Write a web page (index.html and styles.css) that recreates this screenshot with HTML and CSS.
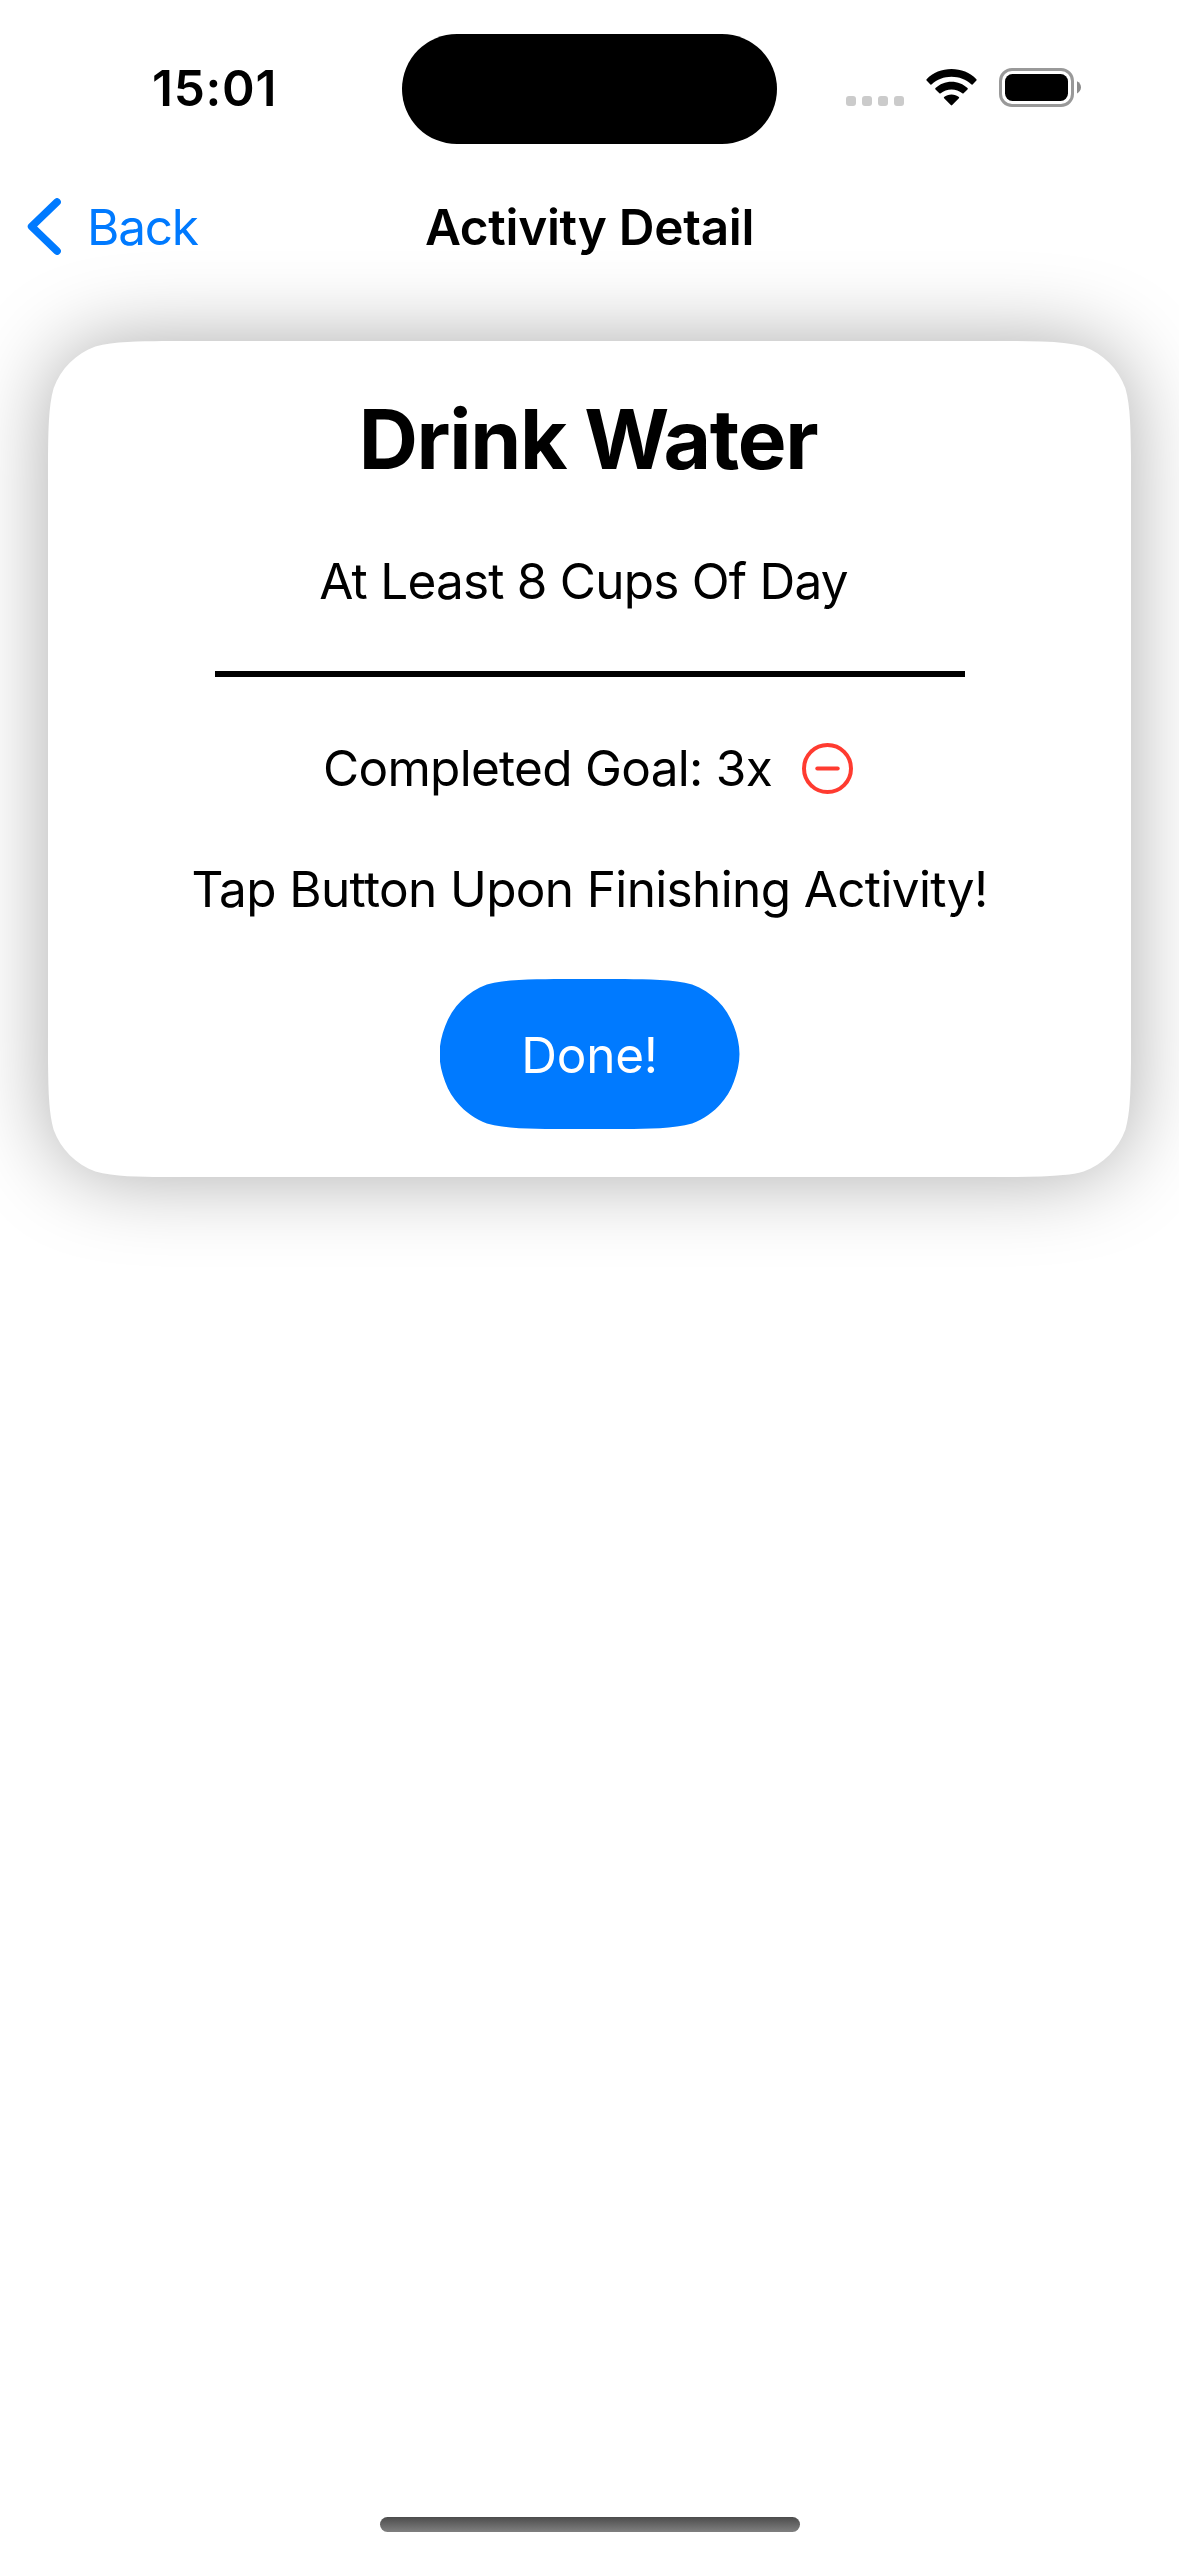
FILE: index.html
```html
<!DOCTYPE html>
<html lang="en">
<head>
<meta charset="utf-8">
<title>Activity Detail</title>
<link rel="stylesheet" href="styles.css">
</head>
<body>
<div class="screen">
  <header class="status">
    <div class="status-side"><span class="time">15:01</span></div>
    <div class="island"></div>
    <div class="status-side status-icons">
      <svg class="dots" width="58" height="10" viewBox="0 0 58 10" fill="#cbcbcb"><rect width="10" height="10" rx="3"/><rect x="16" width="10" height="10" rx="3"/><rect x="32" width="10" height="10" rx="3"/><rect x="48" width="10" height="10" rx="3"/></svg>
      <svg class="wifi" width="51" height="37" viewBox="0 0 51 37"><path d="M25.500 0C35 0 44 3.600 50.400 10.200Q51 10.900 50.400 11.600L46.600 15.400Q46 16 45.200 15.300C40 10.400 33 7.700 25.500 7.700S11 10.400 5.800 15.300Q5 16 4.400 15.400L.6 11.600Q0 10.900 .6 10.200C7 3.600 16 0 25.500 0ZM25.500 12.800C31.700 12.800 37.300 15.200 41.500 19.100Q42.200 19.800 41.500 20.500L37.600 24.300Q37 24.900 36.300 24.300C33.400 21.800 29.600 20.400 25.500 20.400S17.600 21.800 14.700 24.300Q14 24.900 13.400 24.300L9.500 20.500Q8.800 19.800 9.500 19.100C13.700 15.200 19.300 12.800 25.500 12.800ZM25.500 25.400C28.300 25.400 30.900 26.400 32.900 28.100Q33.500 28.700 32.900 29.300L26.200 36.100Q25.500 36.800 24.800 36.100L18.100 29.300Q17.500 28.700 18.100 28.100C20.100 26.400 22.700 25.400 25.500 25.400Z"/></svg>
      <svg class="battery" width="82" height="39" viewBox="0 0 82 39"><rect x="1.500" y="1.500" width="72" height="36" rx="11.500" fill="none" stroke="#999" stroke-width="3"/><rect x="6" y="6" width="63" height="27" rx="7.500"/><path d="M78 13.200C80.500 14.300 82 16.700 82 19.300S80.500 24.300 78 25.400Z" fill="#8c8c8c"/></svg>
    </div>
  </header>
  <nav class="nav">
    <a class="back">
      <svg class="chevron" width="34" height="57" viewBox="0 0 34 57"><path d="M30 4L4.600 28.500L30 53" fill="none" stroke="#007aff" stroke-width="7.600" stroke-linecap="round" stroke-linejoin="round"/></svg>
      <span class="back-label">Back</span>
    </a>
    <h1 class="title">Activity Detail</h1>
    <div></div>
  </nav>
  <main class="card-shadow">
    <section class="card">
      <h2 class="name">Drink Water</h2>
      <p class="line detail">At Least 8 Cups Of Day</p>
      <div class="rule"></div>
      <div class="goal">
        <p class="line goal-text">Completed Goal: 3x</p>
        <svg width="51" height="51" viewBox="0 0 51 51" fill="none" stroke="#ff3b30" stroke-width="4"><circle cx="25.500" cy="25.500" r="23.500"/><path d="M15.300 25.500H35.700" stroke-linecap="round"/></svg>
      </div>
      <p class="line hint">Tap Button Upon Finishing Activity!</p>
      <button class="done"><span class="done-label">Done!</span></button>
    </section>
  </main>
  <div class="home"></div>
</div>
</body>
</html>
```
FILE: styles.css
```css
* { box-sizing: border-box; margin: 0; padding: 0; }
body {
  background: #fff;
  color: #000;
  font-family: Inter, "Liberation Sans", sans-serif;
  font-size: 49.5px;
  line-height: 60px;
}
svg { display: block; flex: none; }
.screen {
  width: 1179px;
  height: 2556px;
  display: flex;
  flex-direction: column;
  overflow: hidden;
}
.status {
  height: 177px;
  display: grid;
  grid-template-columns: 402px 375px 402px;
  align-items: start;
  flex: none;
}
.time {
  display: block;
  padding: 58px 0 0 152px;
  font-weight: 600;
  letter-spacing: 0.75px;
}
.island {
  height: 110px;
  margin-top: 34px;
  border-radius: 55px;
  background: #000;
}
.status-icons {
  display: flex;
  align-items: flex-start;
  padding: 68px 0 0 69px;
}
.dots { margin-top: 28px; }
.wifi { margin: 1px 22px 0; }
.nav {
  height: 164px;
  display: grid;
  grid-template-columns: 1fr auto 1fr;
  align-items: start;
  flex: none;
}
.back {
  display: flex;
  align-items: flex-start;
  gap: 26px;
  padding: 20px 0 0 27px;
  color: #007aff;
  letter-spacing: -1.2px;
}
.chevron { margin-top: 1px; }
.title {
  margin-top: 20px;
  font-size: 49.5px;
  font-weight: 600;
  letter-spacing: -0.3px;
}
.card-shadow {
  width: 1083px;
  margin: 0 auto;
  filter: drop-shadow(0 0 41px rgba(0, 0, 0, 0.33));
}
.card {
  height: 836px;
  display: flex;
  flex-direction: column;
  align-items: center;
  background: #fff;
  clip-path: path("M114.650 0H968.350C991 0.400 1017 0.200 1035.640 5.620C1055.040 12.680 1070.320 27.960 1077.380 47.360C1082.800 66 1082.600 92 1083 114.650V721.350C1082.600 744 1082.800 770 1077.380 788.640C1070.320 808.040 1055.040 823.320 1035.640 830.380C1017 835.800 991 835.600 968.350 836H114.650C92 835.600 66 835.800 47.360 830.380C27.960 823.320 12.680 808.040 5.620 788.640C0.200 770 0.400 744 0 721.350V114.650C0.400 92 0.200 66 5.620 47.360C12.680 27.960 27.960 12.680 47.360 5.620C66 0.200 92 0.400 114.650 0Z");
}
.name {
  margin-top: 49px;
  padding-right: 3px;
  font-size: 82px;
  font-weight: 700;
  line-height: 100px;
  letter-spacing: -1.3px;
}
.line { white-space: nowrap; }
.detail {
  margin-top: 61px;
  padding-right: 12px;
  letter-spacing: -0.78px;
}
.rule {
  width: 750px;
  height: 6px;
  margin-top: 60px;
  background: #000;
}
.goal {
  display: flex;
  align-items: center;
  gap: 30px;
  margin-top: 61px;
  padding-right: 3px;
}
.goal-text { letter-spacing: -0.71px; }
.hint {
  margin-top: 61px;
  letter-spacing: -0.64px;
}
.done {
  width: 300px;
  height: 150px;
  margin-top: 60px;
  padding-top: 2px;
  border: 0;
  background: #007aff;
  color: #fff;
  font: inherit;
  letter-spacing: -0.25px;
  clip-path: path("M114.650 0H185.350C208 0.400 234 0.200 252.640 5.620C272.040 12.680 287.320 27.960 294.380 47.360C297.800 56.500 300 65.700 300 75S297.800 93.500 294.380 102.640C287.320 122.040 272.040 137.320 252.640 144.380C234 149.800 208 149.600 185.350 150H114.650C92 149.600 66 149.800 47.360 144.380C27.960 137.320 12.680 122.040 5.620 102.640C2.200 93.500 0 84.300 0 75S2.200 56.500 5.620 47.360C12.680 27.960 27.960 12.680 47.360 5.620C66 0.200 92 0.400 114.650 0Z");
}
.home {
  width: 420px;
  height: 15px;
  margin: auto auto 24px;
  border-radius: 8px;
  background: linear-gradient(#4c4c4c, #808080);
}
```
